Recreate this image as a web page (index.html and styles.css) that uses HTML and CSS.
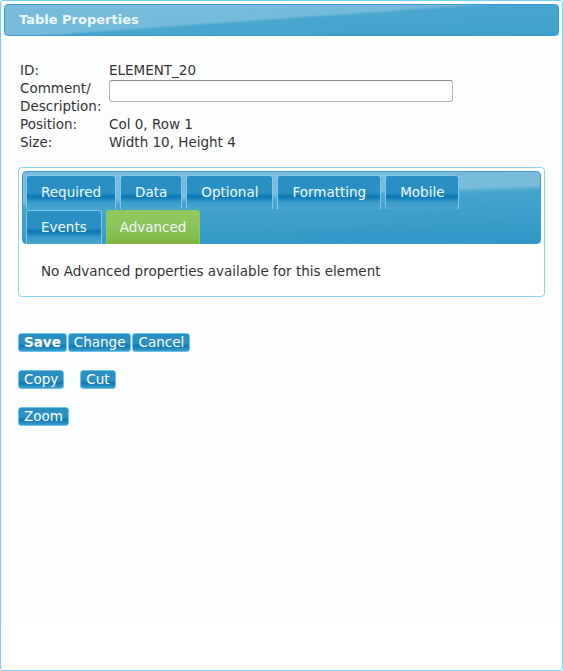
FILE: index.html
```html
<!DOCTYPE html>
<html lang="en">
<head>
    <meta charset="UTF-8">
    <meta name="viewport" content="width=device-width, initial-scale=1.0">
    <title>Table Properties</title>
    <link rel="stylesheet" href="styles.css">
</head>
<body>
    <div class="dialog">
        <div class="dialog-header">Table Properties</div>

        <table class="props">
            <tr>
                <td class="label">ID:</td>
                <td>ELEMENT_20</td>
            </tr>
            <tr>
                <td class="label">Comment/<br>Description:</td>
                <td class="top"><input type="text" class="comment"></td>
            </tr>
            <tr>
                <td class="label">Position:</td>
                <td>Col 0, Row 1</td>
            </tr>
            <tr>
                <td class="label">Size:</td>
                <td>Width 10, Height 4</td>
            </tr>
        </table>

        <div class="tabs">
            <div class="tab-bar">
                <span class="tab">Required</span>
                <span class="tab">Data</span>
                <span class="tab">Optional</span>
                <span class="tab">Formatting</span>
                <span class="tab">Mobile</span>
                <span class="tab">Events</span>
                <span class="tab active">Advanced</span>
            </div>
            <div class="tab-body">No Advanced properties available for this element</div>
        </div>

        <div class="actions">
            <div class="btn-row">
                <button class="btn bold">Save</button><button class="btn">Change</button><button class="btn">Cancel</button>
            </div>
            <div class="btn-row spaced">
                <button class="btn">Copy</button>
                <button class="btn">Cut</button>
            </div>
            <div class="btn-row">
                <button class="btn">Zoom</button>
            </div>
        </div>
    </div>
</body>
</html>
```

FILE: styles.css
```css
html, body {
    margin: 0;
    padding: 0;
    height: 100%;
}

body {
    font-family: "DejaVu Sans", Verdana, sans-serif;
    font-size: 13.5px;
    color: #333;
    background: #fff;
}

.dialog {
    box-sizing: border-box;
    height: 671px;
    border: 1px solid #6fd3f3;
    border-radius: 3px;
    padding: 3px;
    background: linear-gradient(#fcfefe 0%, #fcfefe 93%, #ffffff 93%);
}

.dialog-header {
    height: 32px;
    box-sizing: border-box;
    border: 1px solid #3a9bd0;
    border-radius: 4px;
    padding: 7px 0 0 14px;
    color: #eef8fc;
    font-weight: bold;
    font-size: 13px;
    background: linear-gradient(176deg, #78bcdb 0%, #75badb 46%, #4aa6d0 50%, #3fa2cd 100%);
}

.props {
    margin: 25px 0 0 16px;
    border-collapse: collapse;
}

.props td {
    padding: 0;
    line-height: 18px;
    vertical-align: top;
}

.props .label {
    width: 89px;
}

.comment {
    box-sizing: border-box;
    width: 344px;
    height: 22px;
    margin: 1px 0 0;
    border: 1px solid #b5b5b5;
    border-top-color: #8a8a8a;
    border-radius: 3px;
    background: #fff;
}

.tabs {
    margin: 16px 14px 0 14px;
    border: 1px solid #8fd3f2;
    border-radius: 4px;
    padding: 3px;
    background: #fff;
}

.tab-bar {
    display: flex;
    flex-wrap: wrap;
    gap: 1px 4px;
    padding: 3px 70px 0 3px;
    height: 73px;
    box-sizing: border-box;
    border: 1px solid #3b9bcf;
    border-radius: 4px;
    background: linear-gradient(178deg, #7abcdb 0%, #78bbda 35%, #48a5cf 40%, #2e96c7 100%);
}

.tab {
    box-sizing: border-box;
    height: 34px;
    padding: 8px 14px 0;
    border: 1px solid #7fc6ea;
    border-bottom: none;
    border-radius: 3px 3px 0 0;
    color: #f2fafd;
    background: linear-gradient(#2a8fc2 0%, #2a8fc2 52%, #0877b2 62%, #3a9ccb 80%, #4aa5cf 100%);
}

.tab.active {
    border-color: #8fc760;
    background: linear-gradient(#93c761 0%, #8dc35a 50%, #7db53e 100%);
    padding: 8px 13px 0;
}

.tab-body {
    padding: 18px 19px 13px;
    line-height: 18px;
    color: #333;
}

.actions {
    margin: 36px 0 0 14px;
}

.btn-row {
    display: flex;
    gap: 1px;
    margin-bottom: 18px;
}

.btn-row.spaced {
    gap: 16px;
}

.btn {
    font-family: "DejaVu Sans", Verdana, sans-serif;
    font-size: 13.5px;
    color: #fff;
    height: 19px;
    padding: 0 5px;
    margin: 0;
    line-height: 17px;
    border: 1px solid #6ec3eb;
    border-radius: 3px;
    background: linear-gradient(#2a90c4 0%, #2a90c4 55%, #0b79b3 70%, #3a9dcc 100%);
}

.btn.bold {
    font-weight: bold;
}
```
